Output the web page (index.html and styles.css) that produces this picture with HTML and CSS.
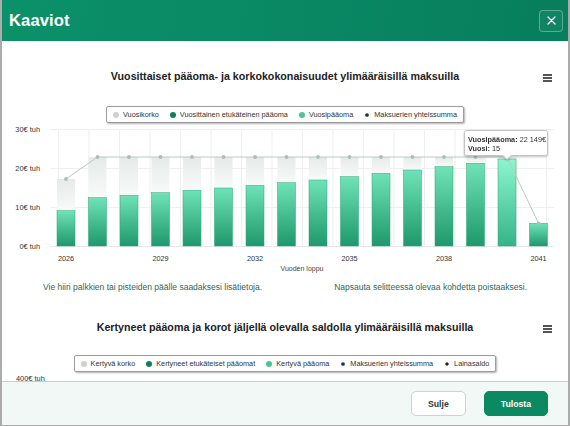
FILE: index.html
```html
<!DOCTYPE html>
<html lang="fi">
<head>
<meta charset="utf-8">
<title>Kaaviot</title>
<link rel="stylesheet" href="styles.css">
</head>
<body>
<div class="modal">
  <header class="modal-head">
    <h1 class="modal-title">Kaaviot</h1>
    <button class="close-btn" aria-label="Sulje">
      <svg width="9" height="9" viewBox="0 0 9 9"><path d="M1 1L8 8M8 1L1 8" stroke="#fff" stroke-width="1.3" stroke-linecap="round"/></svg>
    </button>
  </header>

  <main class="modal-body">
    <section class="chart">
      <div class="chart-head">
        <h2 class="chart-title">Vuosittaiset pääoma- ja korkokokonaisuudet ylimääräisillä maksuilla</h2>
        <span class="menu"><i></i><i></i><i></i></span>
      </div>
      <div class="legend">
        <span class="item"><span class="dot dot-korko"></span>Vuosikorko</span>
        <span class="item"><span class="dot dot-etu"></span>Vuosittainen etukäteinen pääoma</span>
        <span class="item"><span class="dot dot-paa"></span>Vuosipääoma</span>
        <span class="item"><span class="dot dot-sum"></span>Maksuerien yhteissumma</span>
      </div>

      <svg class="plot" width="566" height="151" viewBox="2 123 566 151">
        <defs>
          <linearGradient id="gBar" x1="0" y1="0" x2="0" y2="1">
            <stop offset="0" stop-color="#6fe3b7"/>
            <stop offset="1" stop-color="#1e986c"/>
          </linearGradient>
          <linearGradient id="gBarHover" x1="0" y1="0" x2="0" y2="1">
            <stop offset="0" stop-color="#8ef5cf"/>
            <stop offset="1" stop-color="#35b487"/>
          </linearGradient>
          <linearGradient id="gLight" x1="0" y1="0" x2="0" y2="1">
            <stop offset="0" stop-color="#e5eae8"/>
            <stop offset="1" stop-color="#f9fafa"/>
          </linearGradient>
        </defs>

        <g class="grid">
          <path d="M50 129.5H554M50 168.5H554M50 207.5H554"/>
          <path d="M58.5 129V246M89 129V246M119.5 129V246M150 129V246M180.5 129V246M211 129V246M241.5 129V246M272 129V246M302.5 129V246M333 129V246M363.5 129V246M394 129V246M424.5 129V246M455 129V246M485.5 129V246M516 129V246M546.5 129V246"/>
        </g>
        <path class="axis" d="M50 246.5H554"/>

        <g class="ylab">
          <text x="40" y="131.7">30€ tuh</text>
          <text x="40" y="170.7">20€ tuh</text>
          <text x="40" y="209.7">10€ tuh</text>
          <text x="40" y="248.7">0€ tuh</text>
        </g>

        <g fill="url(#gLight)">
          <rect x="57" y="179" width="18" height="31.7"/>
          <rect x="88.5" y="157" width="18" height="40.7"/>
          <rect x="120" y="157" width="18" height="38.3"/>
          <rect x="151.5" y="157" width="18" height="35.7"/>
          <rect x="183" y="157" width="18" height="33.3"/>
          <rect x="214.5" y="157" width="18" height="31"/>
          <rect x="246" y="157" width="18" height="28.3"/>
          <rect x="277.5" y="157" width="18" height="25.7"/>
          <rect x="309" y="157" width="18" height="23"/>
          <rect x="340.5" y="157" width="18" height="19.7"/>
          <rect x="372" y="157" width="18" height="16.3"/>
          <rect x="403.5" y="157" width="18" height="13"/>
          <rect x="435" y="157" width="18" height="9.7"/>
          <rect x="466.5" y="157" width="18" height="6.3"/>
          <rect x="498" y="157" width="18" height="2"/>
        </g>

        <g class="bars" fill="url(#gBar)">
          <rect x="57" y="210.7" width="18" height="35.3"/>
          <rect x="88.5" y="197.7" width="18" height="48.3"/>
          <rect x="120" y="195.3" width="18" height="50.7"/>
          <rect x="151.5" y="192.7" width="18" height="53.3"/>
          <rect x="183" y="190.3" width="18" height="55.7"/>
          <rect x="214.5" y="188" width="18" height="58"/>
          <rect x="246" y="185.3" width="18" height="60.7"/>
          <rect x="277.5" y="182.7" width="18" height="63.3"/>
          <rect x="309" y="180" width="18" height="66"/>
          <rect x="340.5" y="176.7" width="18" height="69.3"/>
          <rect x="372" y="173.3" width="18" height="72.7"/>
          <rect x="403.5" y="170" width="18" height="76"/>
          <rect x="435" y="166.7" width="18" height="79.3"/>
          <rect x="466.5" y="163.3" width="18" height="82.7"/>
          <rect x="498" y="159" width="18" height="87" fill="url(#gBarHover)"/>
          <rect x="529.5" y="223.3" width="18" height="22.7"/>
        </g>

        <polyline class="sumline" points="66,179 97.5,157 129,157 160.5,157 192,157 223.5,157 255,157 286.5,157 318,157 349.5,157 381,157 412.5,157 444,157 475.5,157 507,157 538.5,223.3"/>
        <g class="markers">
          <circle cx="66" cy="179" r="1.9"/>
          <circle cx="97.5" cy="157" r="1.9"/>
          <circle cx="129" cy="157" r="1.9"/>
          <circle cx="160.5" cy="157" r="1.9"/>
          <circle cx="192" cy="157" r="1.9"/>
          <circle cx="223.5" cy="157" r="1.9"/>
          <circle cx="255" cy="157" r="1.9"/>
          <circle cx="286.5" cy="157" r="1.9"/>
          <circle cx="318" cy="157" r="1.9"/>
          <circle cx="349.5" cy="157" r="1.9"/>
          <circle cx="381" cy="157" r="1.9"/>
          <circle cx="412.5" cy="157" r="1.9"/>
          <circle cx="444" cy="157" r="1.9"/>
          <circle cx="475.5" cy="157" r="1.9"/>
          <circle cx="538.5" cy="223.3" r="1.9"/>
        </g>

        <g class="xlab">
          <text x="66" y="260.7">2026</text>
          <text x="160.5" y="260.7">2029</text>
          <text x="255" y="260.7">2032</text>
          <text x="349.5" y="260.7">2035</text>
          <text x="444" y="260.7">2038</text>
          <text x="538.5" y="260.7">2041</text>
          <text class="xtitle" x="302" y="271">Vuoden loppu</text>
        </g>

        <g class="tooltip">
          <path d="M466.5 130.5H545.5A2 2 0 0 1 547.5 132.5V153.5A2 2 0 0 1 545.5 155.5H511L507 159.5L503 155.5H466.5A2 2 0 0 1 464.5 153.5V132.5A2 2 0 0 1 466.5 130.5Z"/>
          <text x="468" y="142.3"><tspan class="b">Vuosipääoma:</tspan> 22 149€</text>
          <text x="468" y="151.3"><tspan class="b">Vuosi:</tspan> 15</text>
        </g>
      </svg>

      <div class="hints">
        <p>Vie hiiri palkkien tai pisteiden päälle saadaksesi lisätietoja.</p>
        <p>Napsauta selitteessä olevaa kohdetta poistaaksesi.</p>
      </div>
    </section>

    <section class="chart chart-second">
      <div class="chart-head">
        <h2 class="chart-title">Kertyneet pääoma ja korot jäljellä olevalla saldolla ylimääräisillä maksuilla</h2>
        <span class="menu"><i></i><i></i><i></i></span>
      </div>
      <div class="legend">
        <span class="item"><span class="dot dot-korko"></span>Kertyvä korko</span>
        <span class="item"><span class="dot dot-etu"></span>Kertyneet etukäteiset pääomat</span>
        <span class="item"><span class="dot dot-paa"></span>Kertyvä pääoma</span>
        <span class="item"><span class="dot dot-sum"></span>Maksuerien yhteissumma</span>
        <span class="item"><span class="dot dot-diamond"></span>Lainasaldo</span>
      </div>
      <div class="ytick">400€ tuh</div>
    </section>
  </main>

  <footer class="modal-foot">
    <button class="btn btn-secondary">Sulje</button>
    <button class="btn btn-primary">Tulosta</button>
  </footer>
</div>
</body>
</html>
```

FILE: styles.css
```css
* { box-sizing: border-box; }

html, body {
  margin: 0;
  padding: 0;
  background: #ffffff;
}

body {
  font-family: "Liberation Sans", Arial, sans-serif;
  color: #333333;
}

.modal {
  width: 570px;
  height: 426px;
  display: flex;
  flex-direction: column;
  border-left: 2px solid #ababab;
  border-right: 2px solid #ababab;
  border-bottom: 1px solid #ababab;
  overflow: hidden;
}

.modal-head {
  height: 41px;
  flex: none;
  display: flex;
  align-items: center;
  justify-content: space-between;
  padding: 0 5px 0 7px;
  background: linear-gradient(100deg, #0b9169 0%, #098763 55%, #077e5c 100%);
}

.modal-title {
  margin: 0;
  font-size: 16.6px;
  font-weight: 700;
  color: #ffffff;
  letter-spacing: 0.1px;
}

.close-btn {
  width: 24px;
  height: 22px;
  padding: 0;
  display: flex;
  align-items: center;
  justify-content: center;
  background: rgba(255, 255, 255, 0.04);
  border: 1px solid rgba(255, 255, 255, 0.32);
  border-radius: 4px;
}

.modal-body {
  flex: 1;
  overflow: hidden;
  background: #ffffff;
}

.chart-head {
  position: relative;
  margin-top: 28px;
  height: 14px;
  display: flex;
  justify-content: center;
  align-items: center;
}

.chart-title {
  margin: 0;
  font-size: 10.7px;
  line-height: 14px;
  font-weight: 700;
  color: #222222;
  white-space: nowrap;
}

.menu {
  position: absolute;
  right: 16px;
  top: 5px;
  width: 9px;
  display: flex;
  flex-direction: column;
  gap: 1.5px;
}

.menu i {
  display: block;
  height: 1.5px;
  background: #555555;
}

.legend {
  width: max-content;
  height: 17px;
  margin: 23px auto 0;
  padding: 0 6px;
  display: flex;
  align-items: center;
  gap: 11px;
  border: 1px solid #9c9c9c;
  border-radius: 2px;
  box-shadow: 1px 1px 2px rgba(0, 0, 0, 0.3);
  font-size: 7.3px;
  color: #333333;
  background: #ffffff;
}

.item {
  display: flex;
  align-items: center;
  gap: 4px;
  white-space: nowrap;
}

.dot {
  width: 6px;
  height: 6px;
  border-radius: 50%;
  flex: none;
}

.dot-korko { background: #c6d6ce; }
.dot-etu { background: #0e8059; }
.dot-paa { background: #4fc394; }
.dot-sum { background: #15392e; transform: scale(0.62); }
.dot-diamond {
  background: #222222;
  border-radius: 0;
  transform: rotate(45deg) scale(0.5);
}

.plot {
  display: block;
}

.grid path {
  stroke: #efefef;
  stroke-width: 1;
  fill: none;
}

.axis {
  stroke: #e6e6e6;
  stroke-width: 1;
}

.ylab text {
  font-family: "Liberation Sans", Arial, sans-serif;
  font-size: 7.4px;
  fill: #333333;
  text-anchor: end;
}

.xlab text {
  font-family: "Liberation Sans", Arial, sans-serif;
  font-size: 7.3px;
  fill: #333333;
  text-anchor: middle;
}

.xlab .xtitle {
  font-size: 7px;
  fill: #444444;
}

.bars rect {
  stroke: #2aa87b;
  stroke-width: 0.5;
}

.sumline {
  fill: none;
  stroke: #b9cac2;
  stroke-width: 1;
}

.markers circle {
  fill: #aabfb5;
}

.tooltip {
  filter: drop-shadow(0.5px 1px 1px rgba(0, 0, 0, 0.25));
}

.tooltip path {
  fill: #ffffff;
  stroke: #c4c4c4;
  stroke-width: 1;
}

.tooltip text {
  font-family: "Liberation Sans", Arial, sans-serif;
  font-size: 7.3px;
  fill: #333333;
}

.tooltip .b {
  font-weight: 700;
}

.hints {
  margin-top: 7px;
  padding: 0 41px;
  display: flex;
  justify-content: space-between;
}

.hints p {
  margin: 0;
  font-size: 8.5px;
  line-height: 12px;
  color: #2a6a58;
}

.chart-second .chart-head {
  margin-top: 27px;
}

.chart-second .legend {
  margin-top: 21px;
}

.ytick {
  margin: 2px 0 0 14px;
  font-size: 7.4px;
  line-height: 10px;
  color: #333333;
}

.modal-foot {
  height: 44px;
  flex: none;
  display: flex;
  justify-content: flex-end;
  align-items: center;
  gap: 18px;
  padding: 0 20px 0 0;
  border-top: 1px solid #bfd6cf;
  background: #f1f8f6;
}

.btn {
  height: 25px;
  padding: 0 16px;
  border-radius: 5px;
  font-family: "Liberation Sans", Arial, sans-serif;
  font-size: 8.7px;
  font-weight: 700;
}

.btn-secondary {
  background: #ffffff;
  border: 1px solid #c8d6d2;
  color: #2c3a36;
}

.btn-primary {
  background: #0b8a62;
  border: 1px solid #0b8a62;
  color: #ffffff;
}
```
